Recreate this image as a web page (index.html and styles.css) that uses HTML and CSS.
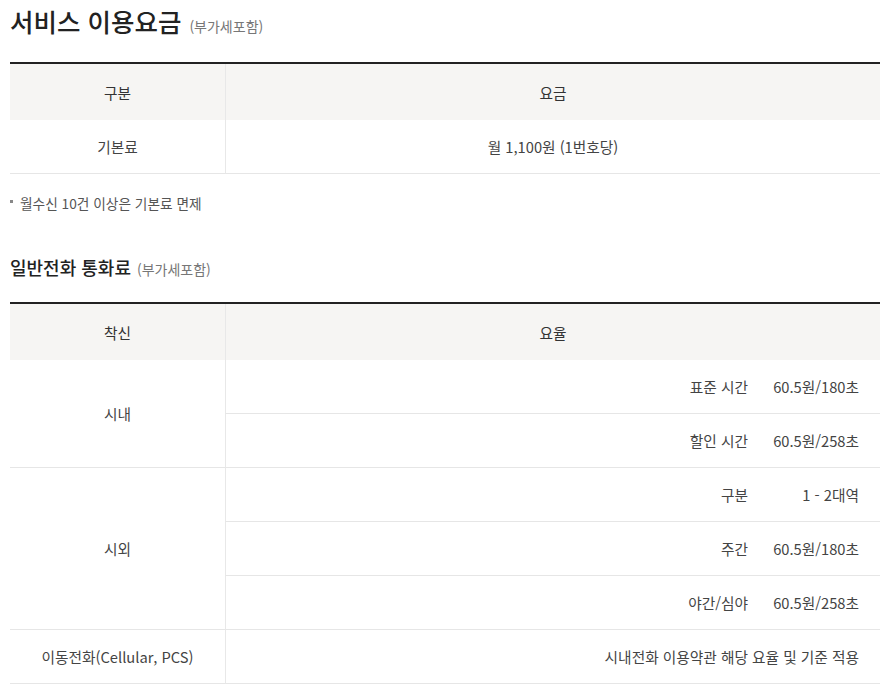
FILE: index.html
```html
<!DOCTYPE html>
<html lang="ko">
<head>
<meta charset="utf-8">
<title>서비스 이용요금</title>
<link rel="stylesheet" href="styles.css">
</head>
<body>
<div class="page">
  <h2 class="title">서비스 이용요금<span class="vat">(부가세포함)</span></h2>
  <table class="fee">
    <colgroup><col class="c1"><col class="c2"></colgroup>
    <thead>
      <tr><th>구분</th><th class="r">요금</th></tr>
    </thead>
    <tbody>
      <tr><td>기본료</td><td class="r">월 1,100원 (1번호당)</td></tr>
    </tbody>
  </table>
  <p class="note"><span class="dot"></span>월수신 10건 이상은 기본료 면제</p>

  <h3 class="subtitle">일반전화 통화료<span class="vat">(부가세포함)</span></h3>
  <table class="fee">
    <colgroup><col class="c1"><col class="c2"></colgroup>
    <thead>
      <tr><th>착신</th><th class="r">요율</th></tr>
    </thead>
    <tbody>
      <tr><td rowspan="2">시내</td><td class="r right"><span class="lbl">표준 시간</span><span class="val">60.5원/180초</span></td></tr>
      <tr><td class="r right"><span class="lbl">할인 시간</span><span class="val">60.5원/258초</span></td></tr>
      <tr><td rowspan="3">시외</td><td class="r right"><span class="lbl">구분</span><span class="val">1 - 2대역</span></td></tr>
      <tr><td class="r right"><span class="lbl">주간</span><span class="val">60.5원/180초</span></td></tr>
      <tr><td class="r right"><span class="lbl">야간/심야</span><span class="val">60.5원/258초</span></td></tr>
      <tr><td>이동전화(Cellular, PCS)</td><td class="r right">시내전화 이용약관 해당 요율 및 기준 적용</td></tr>
    </tbody>
  </table>
</div>
</body>
</html>
```

FILE: styles.css
```css
html, body {
  margin: 0;
  padding: 0;
  background: #fff;
}
body {
  font-family: "Noto Sans CJK KR", "Noto Sans", sans-serif;
  color: #333;
}
.page {
  width: 870px;
  margin-left: 10px;
}
.title,
.subtitle {
  display: flex;
  align-items: baseline;
}
.title {
  margin: 0 0 23px;
  padding-top: 3px;
  height: 36px;
  font-size: 25.5px;
  line-height: 36px;
  font-weight: 500;
  color: #222;
}
.vat {
  margin-left: 8px;
  font-size: 14px;
  line-height: 20px;
  font-weight: 400;
  color: #777;
}
.subtitle .vat {
  margin-left: 6px;
}
.subtitle {
  margin: 40px 0 21px;
  height: 28px;
  font-size: 18px;
  line-height: 28px;
  font-weight: 500;
  color: #222;
}
.fee {
  width: 870px;
  table-layout: fixed;
  border-collapse: separate;
  border-spacing: 0;
  border-top: 2px solid #222;
  font-size: 14.7px;
}
.c1 { width: 215px; }
.fee th {
  height: 56px;
  padding: 0;
  background: #f6f5f3;
  font-weight: 400;
  color: #333;
  text-align: center;
  vertical-align: middle;
}
.fee td {
  height: 53px;
  padding: 0;
  border-bottom: 1px solid #e6e6e6;
  text-align: center;
  vertical-align: middle;
  color: #444;
}
.fee .r {
  border-left: 1px solid #e8e8e8;
}
.fee td.right {
  text-align: right;
  padding-right: 21px;
}
.lbl {
  margin-right: 23px;
}
.val {
  display: inline-block;
  width: 88px;
  text-align: right;
}
.note {
  margin: 19px 0 0;
  font-size: 13.7px;
  line-height: 20px;
  color: #555;
  display: flex;
  align-items: center;
}
.dot {
  width: 3px;
  height: 3px;
  background: #888;
  margin-right: 7px;
  margin-top: -4px;
}
```
